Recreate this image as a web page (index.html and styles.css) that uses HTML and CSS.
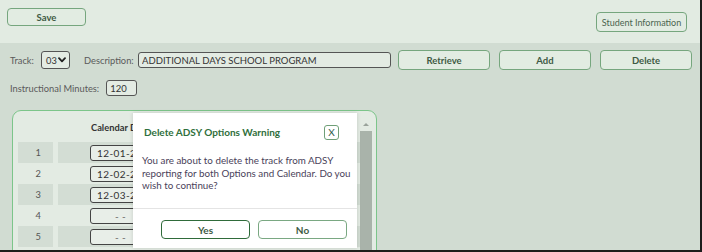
FILE: index.html
```html
<!DOCTYPE html>
<html lang="en">
<head>
  <meta charset="UTF-8" />
  <title>ADSY Options</title>
  <link rel="stylesheet" href="styles.css">
</head>
<body>
  <div class="frame">
    <div class="topbar">
      <button class="btn btn-save">Save</button>
      <button class="btn btn-student">Student Information</button>
    </div>

    <div class="main">
      <div class="row">
        <label class="lbl">Track:</label>
        <div class="select">
          <span>03</span>
          <svg class="caret" width="8" height="6" viewBox="0 0 8 6"><path d="M1 1.2 L4 4.4 L7 1.2" fill="none" stroke="#222" stroke-width="1.8" stroke-linecap="round" stroke-linejoin="round"/></svg>
        </div>
        <label class="lbl lbl-desc">Description:</label>
        <input class="field desc" type="text" value="ADDITIONAL DAYS SCHOOL PROGRAM" />
        <button class="btn btn-action">Retrieve</button>
        <button class="btn btn-action">Add</button>
        <button class="btn btn-action">Delete</button>
      </div>

      <div class="row row-min">
        <label class="lbl">Instructional Minutes:</label>
        <input class="field minutes" type="text" value="120" />
      </div>

      <div class="panel">
        <div class="panel-body">
          <div class="cal-head">Calendar Date</div>
          <div class="cal-row odd"><span class="num">1</span><span class="date">12-01-2023</span></div>
          <div class="cal-row"><span class="num">2</span><span class="date">12-02-2023</span></div>
          <div class="cal-row odd"><span class="num">3</span><span class="date">12-03-2023</span></div>
          <div class="cal-row"><span class="num">4</span><span class="date empty">- -</span></div>
          <div class="cal-row odd"><span class="num">5</span><span class="date empty">- -</span></div>
          <div class="cal-row"><span class="num"></span><span class="date"></span></div>
        </div>
        <div class="scrollbar">
          <span class="arrow"></span>
          <span class="thumb"></span>
        </div>
      </div>
    </div>

    <div class="modal">
      <div class="modal-head">
        <span class="modal-title">Delete ADSY Options Warning</span>
        <button class="close">X</button>
      </div>
      <p class="modal-text">You are about to delete the track from ADSY reporting for both Options and Calendar. Do you wish to continue?</p>
      <div class="modal-foot">
        <button class="btn btn-yes">Yes</button>
        <button class="btn btn-no">No</button>
      </div>
    </div>
  </div>
</body>
</html>
```

FILE: styles.css
```css
* {
  box-sizing: border-box;
}
body {
  margin: 0;
  width: 702px;
  height: 252px;
  overflow: hidden;
  font-family: Lato, "Open Sans", sans-serif;
  font-size: 9.3px;
  color: #4a4a4a;
}
.frame {
  position: relative;
  width: 702px;
  height: 252px;
  border-right: 2px solid #1c1c1c;
  border-bottom: 2px solid #1c1c1c;
  background: #d1dcd2;
  overflow: hidden;
}
.topbar {
  height: 43px;
  background: #e2ebe2;
  display: flex;
  justify-content: space-between;
  align-items: flex-start;
  padding: 8px 13px 0 7px;
}
.btn {
  font-family: inherit;
  font-size: 9.5px;
  font-weight: bold;
  color: #3e5a44;
  background: #e2ece2;
  border: 1px solid #76a67e;
  border-radius: 4px;
  cursor: pointer;
  padding: 0;
}
.btn-save {
  width: 79px;
  height: 18px;
}
.btn-student {
  margin-top: 4px;
  width: 91px;
  height: 20px;
  font-size: 9px;
  font-weight: normal;
  color: #4a644f;
}
.main {
  padding: 7px 10px 0 10px;
}
.row {
  display: flex;
  align-items: center;
  height: 20px;
}
.row > * {
  flex-shrink: 0;
}
.lbl {
  color: #5a5a5a;
}
.lbl:first-child {
  width: 31px;
}
.row-min .lbl:first-child {
  width: auto;
  margin-right: 7px;
}
.lbl-desc {
  margin-left: 14px;
  width: 54px;
}
.select {
  width: 29px;
  height: 18px;
  border: 1px solid #555;
  border-radius: 3px;
  background: #e3ebe3;
  padding: 0 3px 0 4px;
  color: #333;
  display: flex;
  justify-content: space-between;
  align-items: center;
}
.field {
  font-family: inherit;
  font-size: 9.5px;
  color: #333;
  background: #e3ebe3;
  border: 1px solid #555;
  border-radius: 3px;
  height: 16px;
  padding: 0 3px;
}
.desc {
  width: 253px;
  margin-right: 7px;
}
.btn-action {
  width: 92px;
  height: 20px;
  margin-right: 9px;
}
.btn-action:last-child {
  margin-right: 0;
}
.row-min {
  margin-top: 8px;
}
.minutes {
  width: 31px;
}
.panel {
  margin: 12px 0 0 2px;
  width: 365px;
  height: 160px;
  background: #e3ebe3;
  border: 1px solid #7cc58a;
  border-radius: 9px;
  display: flex;
  padding: 8px 3px 0 5px;
}
.panel-body {
  flex: 1;
}
.cal-head {
  height: 23px;
  padding-left: 73px;
  font-weight: bold;
  color: #333;
  line-height: 18px;
}
.cal-row {
  display: flex;
  align-items: center;
  height: 21px;
}
.cal-row.odd {
  background: linear-gradient(to right, #d3ddd4 35px, transparent 35px, transparent 40px, #d3ddd4 40px);
}
.cal-row .num {
  width: 35px;
  text-align: right;
  padding-right: 12px;
  color: #555;
}
.cal-row .date {
  margin-left: 37px;
  width: 80px;
  height: 16px;
  border: 1px solid #444;
  border-radius: 3px;
  background: #e8eee8;
  color: #333;
  font-size: 10px;
  letter-spacing: 0.4px;
  padding-left: 6px;
  line-height: 14px;
}
.cal-row .empty {
  padding-left: 24px;
  color: #666;
}
.scrollbar {
  width: 12px;
  display: flex;
  flex-direction: column;
  align-items: center;
  margin-right: 1px;
}
.arrow {
  width: 0;
  height: 0;
  margin: 4px 0 5px;
  border-left: 3px solid transparent;
  border-right: 3px solid transparent;
  border-bottom: 3px solid #9aa39b;
}
.thumb {
  flex: 1;
  width: 12px;
  background: #a9b3aa;
}
.modal {
  position: absolute;
  left: 133px;
  top: 113px;
  width: 224px;
  height: 135px;
  background: #fff;
  box-shadow: 0 0 4px rgba(0, 0, 0, 0.15);
}
.modal-head {
  display: flex;
  justify-content: space-between;
  align-items: center;
  padding: 11px 18px 0 11px;
  height: 27px;
}
.modal-title {
  color: #2f6f3c;
  font-size: 10px;
  font-weight: bold;
}
.close {
  width: 15px;
  height: 15px;
  border: 1px solid #6f9f77;
  border-radius: 3px;
  background: #fff;
  color: #2e5a4c;
  font-family: inherit;
  font-size: 10px;
  padding: 0;
}
.modal-text {
  margin: 14px 6px 0 9px;
  font-size: 9.8px;
  line-height: 12.5px;
  color: #4a3f5a;
  height: 54px;
}
.modal-foot {
  border-top: 1px solid #e4e4e4;
  display: flex;
  gap: 8px;
  padding: 11px 0 0 28px;
}
.btn-yes,
.btn-no {
  width: 89px;
  height: 19px;
  background: #fff;
  font-size: 10px;
}
.btn-yes {
  border: 1.5px solid #2f6b3a;
}
.btn-no {
  border: 1px solid #7aa882;
}
```
